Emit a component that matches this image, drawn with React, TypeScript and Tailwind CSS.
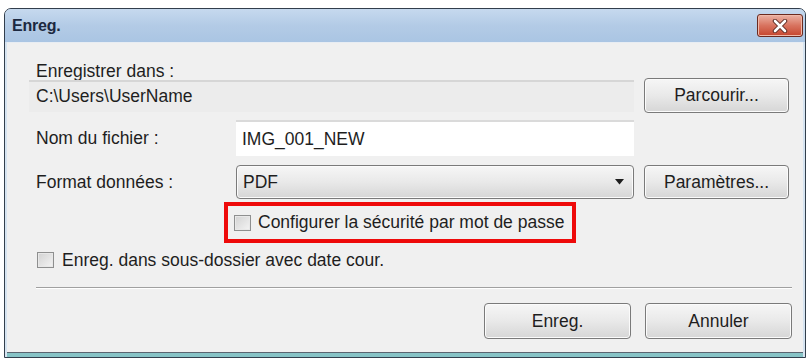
import React from "react";

const font = { fontFamily: '"Liberation Sans", Arial, sans-serif' };

function Btn({ children, className = "" }: { children: React.ReactNode; className?: string }) {
  return (
    <div
      className={
        "flex items-center justify-center rounded-[4px] border border-[#7a7a7a] bg-gradient-to-b from-[#f6f6f6] via-[#e9e9e9] to-[#d6d6d6] shadow-[inset_0_0_0_1px_#fbfbfb] text-[17.5px] text-[#1e1e1e] " +
        className
      }
    >
      {children}
    </div>
  );
}

function Check() {
  return (
    <div className="w-[17px] h-[16px] border border-[#8e8f8f] bg-gradient-to-br from-[#d2d2d2] to-[#f4f4f4] shadow-[inset_0_0_0_1px_#e8e8e8]" />
  );
}

export default function App() {
  return (
    <div className="w-[809px] h-[360px] bg-white pt-[8px] pl-[4px]" style={font}>
      <div className="w-[802px] h-[350px] rounded-t-[7px] border border-[#323e4c] bg-[#c9dbee] flex flex-col overflow-hidden">
        {/* Title bar */}
        <div className="h-[33px] flex items-center justify-between pl-[7px] pr-[2px] bg-gradient-to-b from-[#c6d9ee] via-[#b3cbe6] to-[#aac5e3]">
          <span className="text-[16px] font-bold text-[#1c2940] tracking-[-0.2px]">Enreg.</span>
          <div className="w-[46px] h-[23px] rounded-[3px] border border-[#6b2a1f] bg-gradient-to-b from-[#eab1a3] via-[#d8735f] to-[#c5442c] flex items-center justify-center shadow-[inset_0_0_0_1px_#f0b9a9]">
            <svg width="16" height="14" viewBox="0 0 16 14">
              <path d="M3 2 L13 12 M13 2 L3 12" stroke="#5a2a22" strokeWidth="4.5" strokeLinecap="round" />
              <path d="M3 2 L13 12 M13 2 L3 12" stroke="#ffffff" strokeWidth="2.6" strokeLinecap="round" />
            </svg>
          </div>
        </div>
        {/* Frame */}
        <div className="flex-1 flex flex-col px-[2px] bg-[#d6e4f1]">
          <div className="flex-1 bg-[#f0f0f0] border-t border-[#e8edf3] pl-[22px] pr-[11px] pt-[22px] flex flex-col">
            <div className="h-[13px] pl-[7px] flex items-center text-[17.5px] text-[#1e1e1e]">Enregistrer dans :</div>
            {/* Row 1 */}
            <div className="h-[35px] flex items-center">
              <div className="w-[605px] h-[32px] border-t-2 border-[#d6d6d6] bg-[#ececec] pl-[7px] flex items-center text-[17.5px] text-[#1e1e1e]">
                C:\Users\UserName
              </div>
              <Btn className="ml-[10px] w-[145px] h-[35px]">Parcourir...</Btn>
            </div>
            {/* Row 2 */}
            <div className="mt-[7px] h-[36px] flex items-center">
              <div className="w-[207px] pl-[7px] text-[17.5px] text-[#1e1e1e]">Nom du fichier :</div>
              <div className="w-[398px] h-[36px] border-t-2 border-[#dadada] bg-white pl-[6px] flex items-center text-[17.5px] text-[#1e1e1e]">
                IMG_001_NEW
              </div>
            </div>
            {/* Row 3 */}
            <div className="mt-[9px] h-[34px] flex items-center">
              <div className="w-[207px] pl-[7px] text-[17.5px] text-[#1e1e1e]">Format données :</div>
              <div className="w-[398px] h-[34px] rounded-[4px] border border-[#7a7a7a] bg-gradient-to-b from-[#f6f6f6] via-[#e9e9e9] to-[#d6d6d6] shadow-[inset_0_0_0_1px_#fbfbfb] pl-[6px] pr-[9px] flex items-center justify-between text-[17.5px] text-[#1e1e1e]">
                <span>PDF</span>
                <svg width="9" height="6" viewBox="0 0 9 6">
                  <path d="M0 0 L9 0 L4.5 5.5 Z" fill="#1e1e1e" />
                </svg>
              </div>
              <Btn className="ml-[10px] w-[145px] h-[34px]">Paramètres...</Btn>
            </div>
            {/* Row 4 red box */}
            <div className="mt-[3px] pl-[195px] flex">
              <div className="w-[352px] h-[41px] border-[4px] border-[#ee0a0a] flex items-center pl-[6px] gap-[7px] text-[17.5px] text-[#1e1e1e]">
                <Check />
                <span>Configurer la sécurité par mot de passe</span>
              </div>
            </div>
            {/* Row 5 */}
            <div className="mt-[8px] h-[18px] pl-[8px] flex items-center gap-[8px] text-[17.5px] text-[#1e1e1e]">
              <Check />
              <span>Enreg. dans sous-dossier avec date cour.</span>
            </div>
            {/* Separator */}
            <div className="mt-[18px] ml-[7px] h-[2px] border-t border-[#a0a0a0] border-b border-b-white" />
            {/* Buttons */}
            <div className="mt-[14px] flex justify-end gap-[14px]">
              <Btn className="w-[147px] h-[36px]">Enreg.</Btn>
              <Btn className="w-[147px] h-[36px]">Annuler</Btn>
            </div>
          </div>
          <div className="h-[1px] bg-[#5a6470]" />
          <div className="h-[4px] bg-[#86c3c6]" />
        </div>
      </div>
    </div>
  );
}
